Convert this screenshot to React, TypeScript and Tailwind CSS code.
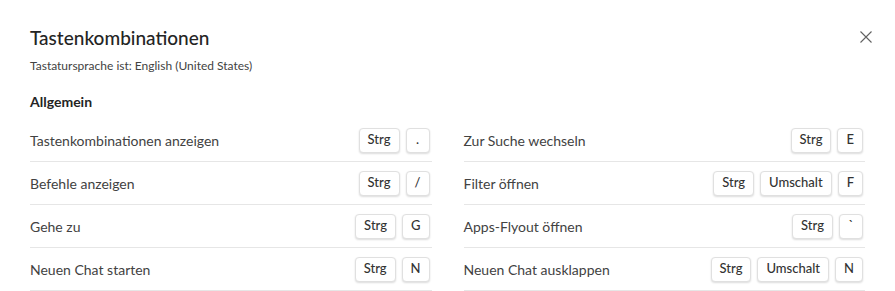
type Shortcut = { label: string; keys: string[] };

const left: Shortcut[] = [
  { label: "Tastenkombinationen anzeigen", keys: ["Strg", "."] },
  { label: "Befehle anzeigen", keys: ["Strg", "/"] },
  { label: "Gehe zu", keys: ["Strg", "G"] },
  { label: "Neuen Chat starten", keys: ["Strg", "N"] },
];

const right: Shortcut[] = [
  { label: "Zur Suche wechseln", keys: ["Strg", "E"] },
  { label: "Filter öffnen", keys: ["Strg", "Umschalt", "F"] },
  { label: "Apps-Flyout öffnen", keys: ["Strg", "`"] },
  { label: "Neuen Chat ausklappen", keys: ["Strg", "Umschalt", "N"] },
];

function Key({ children }: { children: string }) {
  return (
    <span className="flex h-[25px] min-w-[24px] items-center justify-center rounded-[4px] border border-[#e0e0e0] bg-white px-[8px] text-[13px] font-medium text-[#333333] shadow-[0_1px_2px_rgba(0,0,0,0.14)]">
      {children}
    </span>
  );
}

function Row({ item }: { item: Shortcut }) {
  return (
    <div className="flex h-[43px] items-center justify-between border-b border-[#e6e6e6]">
      <span className="text-[14px] text-[#424242]">{item.label}</span>
      <div className="flex items-center gap-[6px] pr-[2px]">
        {item.keys.map((k) => (
          <Key key={k}>{k}</Key>
        ))}
      </div>
    </div>
  );
}

export default function App() {
  return (
    <div
      className="h-[291px] w-[895px] overflow-hidden bg-white px-[30px] pt-[24px]"
      style={{ fontFamily: '"Segoe UI", Lato, sans-serif' }}
    >
      <div className="flex items-start justify-between">
        <h1 className="text-[19px] leading-[28px] font-medium text-[#242424]">
          Tastenkombinationen
        </h1>
        <button className="mt-[7px] -mr-[7px] text-[#616161]">
          <svg width="12" height="12" viewBox="0 0 12 12" fill="none" stroke="currentColor" strokeWidth="1.1">
            <path d="M0.5 0.5 11.5 11.5M11.5 0.5 0.5 11.5" />
          </svg>
        </button>
      </div>
      <p className="mt-[6px] text-[12px] leading-[16px] text-[#424242]">
        Tastatursprache ist: English (United States)
      </p>
      <h2 className="mt-[18px] text-[14px] leading-[20px] font-bold text-[#242424]">
        Allgemein
      </h2>
      <div className="mt-[7px] grid grid-cols-2 gap-x-[32px]">
        <div className="flex flex-col">
          {left.map((s) => (
            <Row key={s.label} item={s} />
          ))}
        </div>
        <div className="flex flex-col">
          {right.map((s) => (
            <Row key={s.label} item={s} />
          ))}
        </div>
      </div>
    </div>
  );
}
